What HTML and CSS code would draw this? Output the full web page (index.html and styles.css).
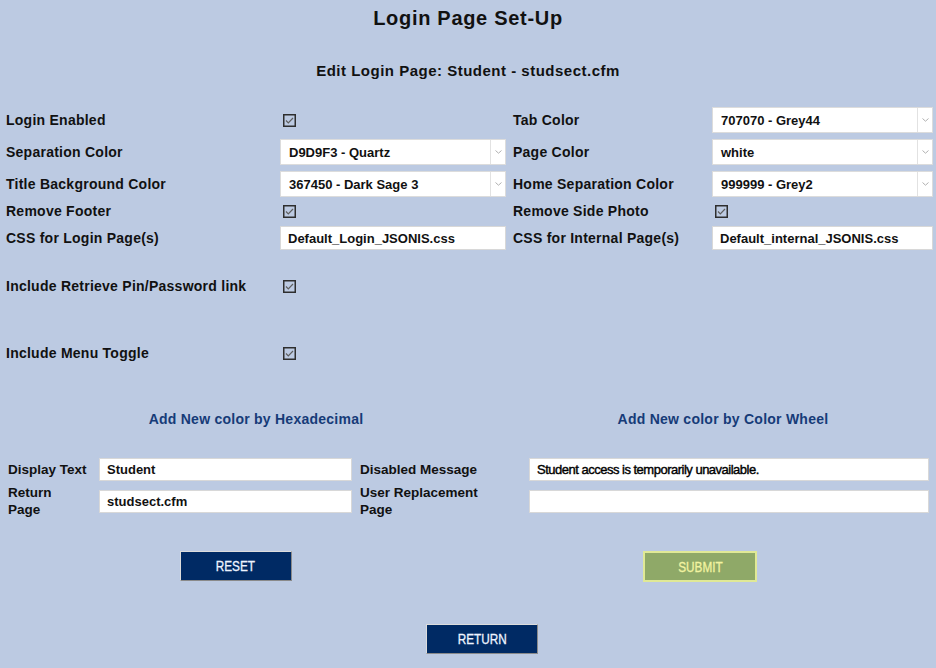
FILE: index.html
```html
<!DOCTYPE html>
<html>
<head>
<meta charset="utf-8">
<title>Login Page Set-Up</title>
<link rel="stylesheet" href="styles.css">
</head>
<body>
<h1 class="title">Login Page Set-Up</h1>
<h2 class="subtitle">Edit Login Page: Student - studsect.cfm</h2>

<div class="settings">
  <div class="row r1">
    <span class="label">Login Enabled</span>
    <span class="cell"><span class="check"><svg width="13" height="13" viewBox="0 0 13 13"><rect x="0.75" y="0.75" width="11.5" height="11.5" fill="none" stroke="#2e2e2e" stroke-width="1.5"/><path d="M3 6.5 L5.3 8.8 L10 4" fill="none" stroke="#5e5e5e" stroke-width="1.2"/></svg></span></span>
    <span class="label">Tab Color</span>
    <div class="select"><span class="value">707070 - Grey44</span><span class="arrow"><svg width="7" height="4" viewBox="0 0 7 4"><path d="M0.5 0.5 L3.5 3.2 L6.5 0.5" fill="none" stroke="#b0b0b0" stroke-width="1"/></svg></span></div>
  </div>
  <div class="row r2">
    <span class="label">Separation Color</span>
    <div class="select"><span class="value">D9D9F3 - Quartz</span><span class="arrow"><svg width="7" height="4" viewBox="0 0 7 4"><path d="M0.5 0.5 L3.5 3.2 L6.5 0.5" fill="none" stroke="#b0b0b0" stroke-width="1"/></svg></span></div>
    <span class="label">Page Color</span>
    <div class="select"><span class="value">white</span><span class="arrow"><svg width="7" height="4" viewBox="0 0 7 4"><path d="M0.5 0.5 L3.5 3.2 L6.5 0.5" fill="none" stroke="#b0b0b0" stroke-width="1"/></svg></span></div>
  </div>
  <div class="row r3">
    <span class="label">Title Background Color</span>
    <div class="select"><span class="value">367450 - Dark Sage 3</span><span class="arrow"><svg width="7" height="4" viewBox="0 0 7 4"><path d="M0.5 0.5 L3.5 3.2 L6.5 0.5" fill="none" stroke="#b0b0b0" stroke-width="1"/></svg></span></div>
    <span class="label">Home Separation Color</span>
    <div class="select"><span class="value">999999 - Grey2</span><span class="arrow"><svg width="7" height="4" viewBox="0 0 7 4"><path d="M0.5 0.5 L3.5 3.2 L6.5 0.5" fill="none" stroke="#b0b0b0" stroke-width="1"/></svg></span></div>
  </div>
  <div class="row r4">
    <span class="label">Remove Footer</span>
    <span class="cell"><span class="check"><svg width="13" height="13" viewBox="0 0 13 13"><rect x="0.75" y="0.75" width="11.5" height="11.5" fill="none" stroke="#2e2e2e" stroke-width="1.5"/><path d="M3 6.5 L5.3 8.8 L10 4" fill="none" stroke="#5e5e5e" stroke-width="1.2"/></svg></span></span>
    <span class="label">Remove Side Photo</span>
    <span class="cell"><span class="check"><svg width="13" height="13" viewBox="0 0 13 13"><rect x="0.75" y="0.75" width="11.5" height="11.5" fill="none" stroke="#2e2e2e" stroke-width="1.5"/><path d="M3 6.5 L5.3 8.8 L10 4" fill="none" stroke="#5e5e5e" stroke-width="1.2"/></svg></span></span>
  </div>
  <div class="row r5">
    <span class="label">CSS for Login Page(s)</span>
    <div class="input">Default_Login_JSONIS.css</div>
    <span class="label">CSS for Internal Page(s)</span>
    <div class="input">Default_internal_JSONIS.css</div>
  </div>
  <div class="row r6">
    <span class="label">Include Retrieve Pin/Password link</span>
    <span class="cell"><span class="check"><svg width="13" height="13" viewBox="0 0 13 13"><rect x="0.75" y="0.75" width="11.5" height="11.5" fill="none" stroke="#2e2e2e" stroke-width="1.5"/><path d="M3 6.5 L5.3 8.8 L10 4" fill="none" stroke="#5e5e5e" stroke-width="1.2"/></svg></span></span>
  </div>
  <div class="row r7">
    <span class="label">Include Menu Toggle</span>
    <span class="cell"><span class="check"><svg width="13" height="13" viewBox="0 0 13 13"><rect x="0.75" y="0.75" width="11.5" height="11.5" fill="none" stroke="#2e2e2e" stroke-width="1.5"/><path d="M3 6.5 L5.3 8.8 L10 4" fill="none" stroke="#5e5e5e" stroke-width="1.2"/></svg></span></span>
  </div>
  <div class="row links">
    <a class="color-link">Add New color by Hexadecimal</a>
    <a class="color-link">Add New color by Color Wheel</a>
  </div>
</div>

<div class="details">
  <div class="drow d1">
    <span class="dlabel">Display Text</span>
    <div class="input">Student</div>
    <span class="dlabel">Disabled Message</span>
    <div class="input light">Student access is temporarily unavailable.</div>
  </div>
  <div class="drow d2">
    <span class="dlabel">Return<br>Page</span>
    <div class="input">studsect.cfm</div>
    <span class="dlabel">User Replacement<br>Page</span>
    <div class="input"></div>
  </div>
</div>

<div class="actions">
  <div class="action-cell"><button class="btn btn-navy"><span class="btn-text">RESET</span></button></div>
  <div class="action-cell"><button class="btn btn-submit"><span class="btn-text">SUBMIT</span></button></div>
</div>
<div class="return-row">
  <button class="btn btn-navy"><span class="btn-text">RETURN</span></button>
</div>
</body>
</html>
```

FILE: styles.css
```css
html, body {
  margin: 0;
  padding: 0;
}
body {
  background: #bccae2;
  font-family: "Liberation Sans", Arial, sans-serif;
  font-size: 13px;
  font-weight: bold;
  color: #111;
  width: 936px;
  height: 668px;
  overflow: hidden;
}
.title {
  margin: 6px 0 0;
  font-size: 20px;
  letter-spacing: 0.7px;
  line-height: 24px;
  text-align: center;
  color: #111;
}
.subtitle {
  margin: 31px 0 0;
  font-size: 15px;
  letter-spacing: 0.5px;
  line-height: 20px;
  text-align: center;
  color: #111;
}
.settings {
  margin-top: 26px;
  padding-left: 6px;
}
.row {
  display: grid;
  grid-template-columns: 274px 226px 7px 199px 221px;
  align-items: center;
  height: 26px;
}
.row > :nth-child(3) { grid-column: 4; }
.row > :nth-child(4) { grid-column: 5; }
.r1 { margin-top: 0; }
.r2 { margin-top: 6px; }
.r3 { margin-top: 6px; }
.r4 { margin-top: 3px; height: 22px; }
.r5 { margin-top: 3px; }
.r6 { margin-top: 24px; height: 22px; }
.r7 { margin-top: 45px; height: 22px; }
.label {
  white-space: nowrap;
  line-height: 16px;
  font-size: 14px;
  letter-spacing: 0.25px;
}
.cell {
  display: flex;
  align-items: center;
  padding-left: 3px;
}
.check {
  display: block;
  width: 13px;
  height: 13px;
}
.check svg { display: block; }
.select {
  display: flex;
  height: 26px;
  box-sizing: border-box;
  background: #fff;
  border: 1px solid #dcdcdc;
}
.select .value {
  flex: 1;
  display: flex;
  align-items: center;
  padding-left: 8px;
  white-space: nowrap;
}
.select .arrow {
  width: 14px;
  border-left: 1px solid #e2e2e2;
  display: flex;
  align-items: center;
  justify-content: center;
}
.select .arrow svg { display: block; }
.input {
  height: 24px;
  box-sizing: border-box;
  background: #fff;
  border: 1px solid #d8d8d8;
  padding-left: 7px;
  display: flex;
  align-items: center;
  white-space: nowrap;
}
.input.light {
  font-weight: normal;
  color: #000;
  letter-spacing: -0.5px;
  -webkit-text-stroke: 0.4px #000;
}
.links {
  margin-top: 46px;
  height: 18px;
}
.links .color-link:first-child { grid-column: 1 / span 2; }
.links .color-link:last-child { grid-column: 4 / span 2; }
.color-link {
  text-align: center;
  color: #163b78;
  font-size: 14px;
  letter-spacing: 0.25px;
  line-height: 18px;
  cursor: pointer;
}
.details {
  margin-top: 29px;
  padding-left: 8px;
}
.drow {
  display: grid;
  grid-template-columns: 91px 253px 8px 169px 400px;
  align-items: center;
}
.drow > :nth-child(3) { grid-column: 4; }
.drow > :nth-child(4) { grid-column: 5; }
.d1 { height: 24px; }
.d1 .input { height: 23px; }
.d2 { height: 34px; margin-top: 3px; }
.d2 .input { height: 23px; }
.dlabel {
  line-height: 17px;
  white-space: nowrap;
  font-size: 13.5px;
}
.actions {
  display: grid;
  grid-template-columns: 471px 458px;
  margin-top: 33px;
}
.action-cell {
  display: flex;
  justify-content: center;
}
.btn {
  font-family: "Liberation Sans", Arial, sans-serif;
  font-size: 14px;
  font-weight: normal;
  height: 30px;
  width: 112px;
  box-sizing: border-box;
  padding: 0;
  cursor: pointer;
}
.btn-text {
  display: inline-block;
  transform: scaleX(0.84);
  -webkit-text-stroke: 0.3px currentColor;
}
.btn-navy {
  background: #002a64;
  color: #eef4ff;
  border: 1px solid;
  border-color: #dcdcdc #8a8a8a #8a8a8a #dcdcdc;
}
.btn-submit {
  background: #8fa968;
  color: #f2f3a0;
  width: 114px;
  height: 31px;
  border: 2px solid #e0e996;
}
.return-row {
  display: flex;
  justify-content: center;
  padding-left: 28px;
  margin-top: 42px;
}
```
